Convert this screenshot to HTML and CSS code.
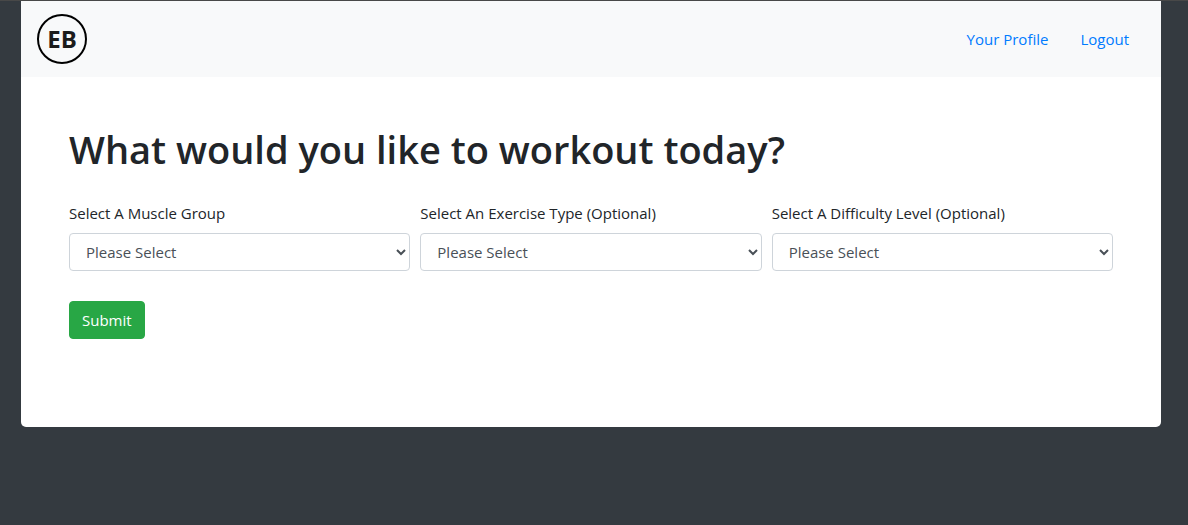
FILE: index.html
```html
<!DOCTYPE html>
<html lang="en">
<head>
<meta charset="utf-8">
<meta name="viewport" content="width=device-width, initial-scale=1">
<title>Exercise Builder</title>
<link rel="stylesheet" href="styles.css">
</head>
<body>
<div class="card">
  <header class="navbar">
    <a class="brand" href="#">EB</a>
    <nav class="nav">
      <a class="nav-link" href="#">Your Profile</a>
      <a class="nav-link" href="#">Logout</a>
    </nav>
  </header>
  <main class="content">
    <h1 class="title">What would you like to workout today?</h1>
    <form>
      <div class="form-row">
        <div class="field">
          <label class="label" for="muscle">Select A Muscle Group</label>
          <select class="select" id="muscle"><option>Please Select</option></select>
        </div>
        <div class="field">
          <label class="label" for="type">Select An Exercise Type (Optional)</label>
          <select class="select" id="type"><option>Please Select</option></select>
        </div>
        <div class="field">
          <label class="label" for="difficulty">Select A Difficulty Level (Optional)</label>
          <select class="select" id="difficulty"><option>Please Select</option></select>
        </div>
      </div>
      <button class="submit" type="submit">Submit</button>
    </form>
  </main>
</div>
</body>
</html>
```
FILE: styles.css
```css
*, *::before, *::after {
  box-sizing: border-box;
}

body {
  margin: 0;
  padding: 0 27px 0 21px;
  min-height: 100vh;
  border-top: 1px solid #484848;
  background: #343a40;
  color: #212529;
  font-family: "Segoe UI", "Open Sans", "Noto Sans", sans-serif;
  font-size: 15px;
  line-height: 24px;
}

.card {
  max-width: 1140px;
  margin: 0 auto;
  background: #fff;
  border-radius: 0 0 5px 5px;
}

.navbar {
  display: flex;
  align-items: center;
  justify-content: space-between;
  padding: 13px 16px;
  background: #f8f9fa;
}

.brand {
  display: flex;
  align-items: center;
  justify-content: center;
  width: 50px;
  height: 50px;
  border: 2px solid #000;
  border-radius: 50%;
  color: #1b1b1b;
  font-size: 24px;
  font-weight: 700;
  text-decoration: none;
}

.nav {
  display: flex;
}

.nav-link {
  padding: 8px 16px;
  color: #007bff;
  text-decoration: none;
}

.content {
  padding: 48px 48px 88px;
}

.title {
  margin: 0 0 28px;
  font-size: 38px;
  font-weight: 600;
  line-height: 48px;
}

.form-row {
  display: grid;
  grid-template-columns: repeat(3, 1fr);
  gap: 10px;
  margin-bottom: 30px;
}

.label {
  display: block;
  margin-bottom: 8px;
}

.select {
  display: block;
  width: 100%;
  height: 38px;
  padding: 6px 12px;
  border: 1px solid #ced4da;
  border-radius: 4px;
  background: #fff;
  color: #495057;
  font: inherit;
}

.submit {
  display: block;
  padding: 6px 12px;
  border: 1px solid #28a745;
  border-radius: 4px;
  background: #28a745;
  color: #fff;
  font: inherit;
}
```
